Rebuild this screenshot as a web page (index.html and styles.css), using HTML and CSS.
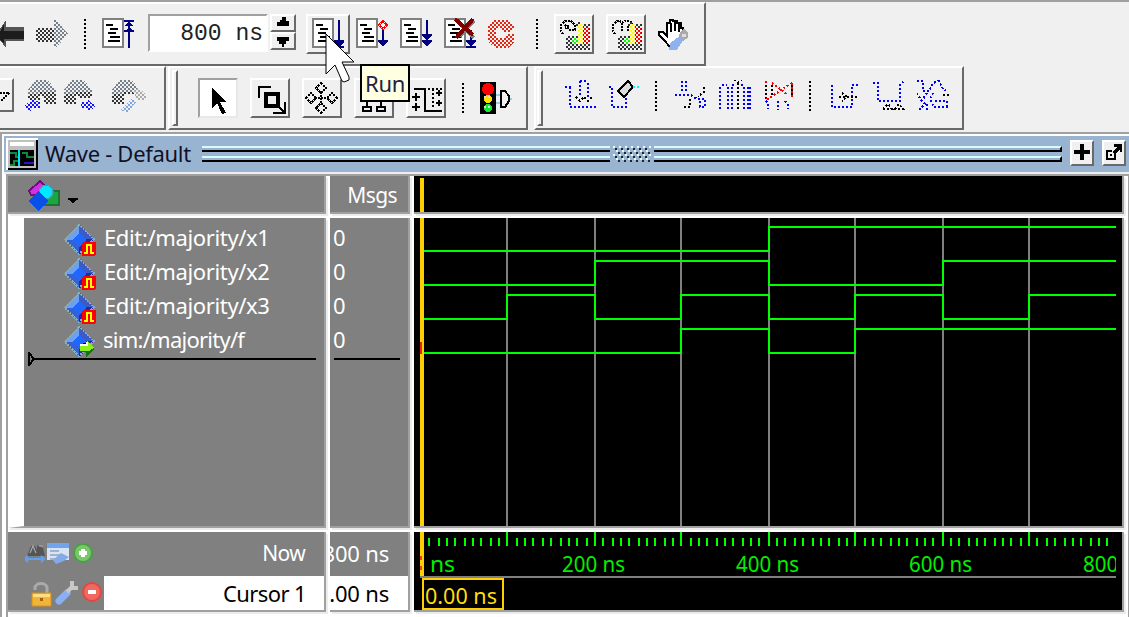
FILE: index.html
```html
<!DOCTYPE html>
<html lang="en">
<head>
<meta charset="utf-8">
<title>Wave - Default</title>
<link rel="stylesheet" href="styles.css">
</head>
<body>
<svg class="defs" width="0" height="0" aria-hidden="true">
  <defs>
    <pattern id="dk" width="4" height="4" patternUnits="userSpaceOnUse"><path fill="#333" d="M0 0h2v2H0zM2 2h2v2H2z"/></pattern>
    <pattern id="gy" width="4" height="4" patternUnits="userSpaceOnUse"><path fill="#75808a" d="M0 0h2v2H0zM2 2h2v2H2z"/></pattern>
    <pattern id="lg" width="4" height="4" patternUnits="userSpaceOnUse"><path fill="#aaa" d="M0 0h2v2H0zM2 2h2v2H2z"/></pattern>
    <pattern id="bl" width="4" height="4" patternUnits="userSpaceOnUse"><path fill="#1414ff" d="M0 0h2v2H0zM2 2h2v2H2z"/></pattern>
    <pattern id="sk" width="4" height="4" patternUnits="userSpaceOnUse"><path fill="#7ea6e8" d="M0 0h2v2H0zM2 2h2v2H2z"/></pattern>
    <pattern id="rd" width="4" height="4" patternUnits="userSpaceOnUse"><path fill="#e02814" d="M0 0h2v2H0zM2 2h2v2H2z"/></pattern>
    <pattern id="rr" width="4" height="4" patternUnits="userSpaceOnUse"><path fill="#f00" d="M0 0h2v2H0zM2 2h2v2H2z"/></pattern>
    <pattern id="yl" width="4" height="4" patternUnits="userSpaceOnUse"><path fill="#ff0" d="M0 0h2v2H0zM2 2h2v2H2z"/></pattern>
    <pattern id="gn" width="4" height="4" patternUnits="userSpaceOnUse"><path fill="#0f0" d="M0 0h2v2H0zM2 2h2v2H2z"/></pattern>
    <symbol id="doc" viewBox="0 0 22 30"><path fill="#fff" stroke="#808080" stroke-width="2" d="M1 1h20v28H1z"/><path stroke="#000" stroke-width="2" d="M4 7h7M8 11h8M6 15h8M8 19h10M6 23h12"/></symbol>
    <symbol id="gem" viewBox="0 0 32 32">
      <path fill="#3458b8" d="M15 0l16 15-16 16L0 16z"/>
      <path fill="#6e9ff0" d="M15 0v10l-5 6H0z"/><path fill="#3c5cc4" d="M15 0v10l6 6h10z"/>
      <path fill="#2828a4" d="M31 15H20l-5 6v10z"/><path fill="#3560d8" d="M0 16h10l5 6v9z"/>
      <path fill="#1e68ff" d="M15 9l7 7-7 7-7-7z"/>
      <path fill="none" stroke="#7fb0c4" stroke-width="1.6" stroke-dasharray="2 1" d="M15 1L1 16l14 14L30 15z"/>
    </symbol>
    <symbol id="edit" viewBox="0 0 32 32"><use href="#gem" width="32" height="32"/><rect x="18" y="18" width="14" height="14" rx="2" fill="#f00"/><path fill="none" stroke="#ff0" stroke-width="2" d="M20 29h3v-8h4v8h3"/></symbol>
    <symbol id="book" viewBox="0 0 28 26"><path fill="url(#gy)" d="M8 0h12l8 10v4H0v-4z"/><path fill="url(#dk)" d="M0 14h12v10H0zM16 12h12v12H16zM12 12h4v4h-4z"/></symbol>
    <symbol id="level" viewBox="0 0 36 36"><path fill="url(#dk)" d="M10 20h12v-2h12v16H10zM20 6h6v4h-6zM26 8h8v12h-8z"/><path fill="#f0f0f0" d="M22 8h5v20h-5zM28 12h5v16h-5zM16 22h6v6h-6z"/><path fill="url(#yl)" d="M22 8h5v20h-5z"/><path fill="url(#rr)" d="M28 12h5v16h-5z"/><path fill="url(#gn)" d="M16 22h6v6h-6z"/></symbol>
  </defs>
</svg>

<header class="toolbars">
  <div class="row row-top">
    <div class="bar bar-main">
      <svg class="ic back" width="24" height="32"><path fill="#555" d="M0 11L6 2v7h18v14H6v7L0 22z"/><path fill="#1c1c1c" d="M0 14L4 6v7h20v8H4v5l-4-5z"/></svg>
      <svg class="ic" width="32" height="32"><path fill="url(#dk)" d="M0 10h18v14H0z"/><path fill="url(#gy)" d="M18 2h2l12 14-12 14h-2z"/></svg>
      <i class="sep g16"></i>
      <svg class="ic g16" width="32" height="32"><use href="#doc" width="22" height="30"/><path fill="none" stroke="#000080" stroke-width="2" d="M22 3h10M27 2v28M22 13h10"/><path fill="#000080" d="M27 3l4 5h-8zM27 9l4 4h-8z"/></svg>
      <div class="field g14">800 ns</div>
      <div class="spin"><span><svg width="22" height="14"><path d="M10 1h4v4h3v5H5V6h3V4h2z"/></svg></span><span><svg width="22" height="14"><path d="M5 3h12v4h-3v3h-2v3h-2v-3H7V7H5z"/></svg></span></div>
      <div class="btn wide g10"><svg width="36" height="32"><use href="#doc" width="22" height="30"/><path stroke="#000080" stroke-width="2" d="M27 2v24M22 29h10"/><path fill="#000080" d="M22 22h10v2l-5 5-5-5z"/></svg></div>
      <svg class="ic g6" width="32" height="32"><use href="#doc" width="22" height="30"/><path stroke="#000080" stroke-width="2" d="M27 12v16"/><path fill="#000080" d="M22 22h10v2l-5 4-5-4z"/><path fill="#fff" stroke="#f00" stroke-width="2" stroke-dasharray="2 .8" d="M27 3l4 4-4 4-4-4z"/></svg>
      <svg class="ic" width="32" height="32"><use href="#doc" width="22" height="30"/><path stroke="#000080" stroke-width="2" d="M27 2v26"/><path fill="#000080" d="M22 16h10v2l-5 4-5-4zM22 22h10v2l-5 4-5-4z"/></svg>
      <svg class="ic" width="32" height="32"><use href="#doc" width="22" height="30"/><path stroke="#000080" stroke-width="2" d="M27 12v17M22 29h10"/><path fill="#000080" d="M22 22h10v2l-5 4-5-4z"/><path stroke="#808080" stroke-width="3" d="M14 4l16 16M30 3L16 19"/><path stroke="#800000" stroke-width="4" d="M11 1l18 16M29 1L12 20"/></svg>
      <svg class="ic" width="32" height="32"><path fill="url(#rd)" d="M6 2h14l6 6v4h-8v-2H8v4H0V8zM0 14h8v6h10v-4h8v8l-6 6H8L0 24z"/><path fill="url(#rd)" d="M14 10h8v4h-8z"/></svg>
      <i class="sep g16"></i>
      <div class="btn g16"><svg width="36" height="36"><path fill="none" stroke="#000" stroke-width="2" stroke-dasharray="2 1" d="M7 18l-2-3V9l4-4h6l4 4v5h-5l-5-5M9 13l4-4"/><use href="#level" width="36" height="36"/></svg></div>
      <div class="btn"><svg width="36" height="36"><path fill="none" stroke="#000" stroke-width="2" stroke-dasharray="2 1" d="M7 18l-2-3V9l4-4h3l2 4v6M14 7l3-2h5l3 4v9M20 15V9"/><use href="#level" width="36" height="36"/></svg></div>
      <svg class="ic" width="32" height="32"><path fill="#fff" stroke="#000" stroke-width="2" d="M11 28L7 23 1 17v-3h4l4 4V5h3V2h3v1h4v2h4v5h2v11l-6 7z"/><path stroke="#000" stroke-width="2" d="M13 5v9M17 4v9M21 6v8"/><path fill="#8fb2ee" d="M12 25l10-7 4 3-8 12h-7z"/><path fill="#aaa" d="M22 14l4-3 4 4v5l-5 3-4-4z"/><path fill="#ddd" d="M24 16h4v3h-4z"/></svg>
    </div>
  </div>
  <div class="row row-bottom">
    <div class="bar bar-find">
      <div class="combo"><svg width="12" height="30"><path fill="none" stroke="#000" stroke-width="2" stroke-dasharray="2 1" d="M0 13h9l-4 4-4 4"/></svg></div>
      <svg class="ic up g10" width="32" height="32"><use href="#book" x="4" width="28" height="26"/><path fill="#f0f0f0" d="M0 20h16v4H4z"/><path fill="url(#bl)" d="M0 26l8-6 8 2v6H8l-2 4z"/></svg>
      <svg class="ic up g8" width="32" height="32"><use href="#book" width="28" height="26"/><path fill="#f0f0f0" d="M16 18h14v6H16z"/><path fill="url(#bl)" d="M16 22h8v-2l8 6-8 6v-4h-6z"/></svg>
      <svg class="ic up g16" width="34" height="32"><use href="#book" x="0" width="28" height="26"/><path fill="#f0f0f0" d="M12 14h16v16H12z"/><path fill="url(#lg)" d="M20 10l6-2 8 6v6h-8z"/><path fill="url(#sk)" d="M20 18l4 4-8 10-8-2z"/></svg>
    </div>
    <div class="bar bar-mode">
      <i class="grip"></i>
      <div class="btn sunken g20"><svg width="36" height="36"><path d="M12 8l14 14h-6l6 11-4 1-5-11-5 5z"/></svg></div>
      <div class="btn"><svg width="36" height="36"><path fill="none" stroke="#000" stroke-width="2" d="M7 18V7h12"/><path fill="none" stroke="#000" stroke-width="4" d="M14 14h12v12H14z"/><path fill="none" stroke="#000" stroke-width="2" d="M26 26l7 7M33 22v11H21"/></svg></div>
      <div class="btn"><svg width="36" height="36"><path fill="none" stroke="#000" stroke-width="2" stroke-dasharray="2 1" d="M17 3l5 5-5 5-5-5zM17 33l5-5-5-5-5 5zM2 18l5-5 5 5-5 5zM33 18l-5-5-5 5 5 5zM11 18h13M17 12v12"/></svg></div>
      <div class="btn"><svg width="36" height="36"><path fill="none" stroke="#000" stroke-width="2" d="M11 26v-5h14v5M18 21v-9M7 27h8v4H7zM21 27h8v4h-8zM14 5h8v6h-8z"/></svg></div>
      <div class="btn"><svg width="36" height="36"><path fill="none" stroke="#000" stroke-width="2" d="M6 9h11v22h17M4 17h8M8 13v8M4 27h8M8 23v8M28 13h6M31 10v6M28 23h6M31 20v6"/><path stroke="#000" stroke-width="2" stroke-dasharray="2 2" d="M20 9h14M25 9v20"/></svg></div>
      <i class="sep g16"></i>
      <svg class="ic g16" width="32" height="32"><path d="M0 0h16v32H0z"/><path stroke="#8fd0f0" stroke-width="2" d="M16 13h5M16 21h5M29 17h3"/><circle cx="8" cy="7" r="6" fill="#f00"/><circle cx="8" cy="17" r="4" fill="#ffe000"/><circle cx="8" cy="26" r="4" fill="#10e830"/><path stroke="#ddd" stroke-width="2" stroke-dasharray="2 2" d="M4 15h8M4 25h8"/><path fill="#f0f0f0" stroke="#000" stroke-width="2" d="M21 9h4l4 5v5l-4 6h-4z"/></svg>
    </div>
    <div class="bar bar-edit">
      <i class="grip"></i>
      <svg class="ic dots g22" width="32" height="32"><path d="M0 7h6M5 7v20h26M15 1v16M15 1h8M23 3v16"/><path class="k" d="M11 17l4 4 4-4 4 4 4-4"/></svg>
      <svg class="ic dots" width="32" height="32"><path d="M0 7h3v20h14V17"/><path class="solid" d="M9 11L19 1l5 6-9 10z"/><path class="c" d="M24 7h7"/></svg>
      <i class="sep up g14"></i>
      <svg class="ic dots g18" width="32" height="32"><path d="M7 1v12M11 1v12M0 15h16l6 4h8v8h-5v-8"/><path class="k" d="M29 7v5l-6 4M9 27h6v-8"/></svg>
      <svg class="ic dots" width="32" height="32"><path d="M1 7v22M9 7v22M13 7v22M25 7v22M29 7v22M3 5h5M13 5h3M22 5h4M31 7v22"/><path class="k" d="M15 0l4 2 4-2M19 3v28"/></svg>
      <svg class="ic dots g14" width="32" height="32"><path class="k" d="M1 5v15M7 5v12M27 5v12"/><path class="r" d="M1 1v4M7 3l16 12M27 3L1 20M27 3v14"/><path d="M1 21l2 2v6M13 21v9M20 21l3 4v4"/></svg>
      <i class="sep up g12"></i>
      <svg class="ic dots g18" width="32" height="32"><path d="M3 5v22h20V5h6"/><path class="k" d="M10 17h18M13 13l5 4-5 4"/></svg>
      <svg class="ic dots" width="32" height="32"><path d="M0 3h5v18h22V5l3-3"/><path class="k" d="M10 29l5-5 4 5zM22 29l4-5 4 5z"/></svg>
      <svg class="ic dots" width="32" height="32"><path d="M0 1h6v10h6l4-8 6-2 4 8 4 2M0 13l4 7 4 4-6 6M10 13l-4 6M16 13l-3 6 4 8h14M18 21h12v6M10 30v-8"/><path class="k" d="M26 15h6"/></svg>
    </div>
  </div>
</header>

<main class="window">
  <div class="titlebar">
    <svg class="appicon" width="32" height="32"><path fill="#fff" d="M0 0h32v32H0z"/><path d="M2 30h28V2h2v30H2z"/><path fill="#c0c0c0" d="M2 2h28v28H2z"/><path fill="#fff" d="M4 4h24v4H4z"/><path d="M4 12h24v16H4z"/><path fill="none" stroke="#108838" stroke-width="2" d="M4 15h6v4h4M4 27h4v-4h4M16 15h5v4h7"/><path stroke="#00e0f0" stroke-width="2" d="M13 12v16"/><path stroke="#3010c8" stroke-width="2" d="M18 25h10"/></svg>
    <h1>Wave - Default</h1>
    <div class="rails"><i></i><i></i></div>
    <svg class="knurl" width="38" height="16"><path stroke="#e8fbff" stroke-width="2" stroke-dasharray="2 4" d="M0 1h38M3 5h35M0 9h38M3 13h35"/><path stroke="#223" stroke-width="2" stroke-dasharray="2 4" d="M2 3h36M5 7h33M2 11h36M5 15h33"/></svg>
    <div class="rails end"><i></i><i></i></div>
    <div class="tbtn"><svg width="22" height="22"><path stroke="#000" stroke-width="4" d="M2 10h16M10 2v16"/></svg></div>
    <div class="tbtn"><svg width="22" height="22"><path fill="none" stroke="#000" stroke-width="2" d="M8 9H3v8h8v-5"/><path d="M10 2h8v8h-2V7l-5 5-3-2 5-5h-3zM6 12h2v2H6z"/></svg></div>
  </div>

  <div class="panes">
    <div class="pane head-names">
      <svg width="52" height="34"><path fill="#d030e8" stroke="#70107c" stroke-width="2" d="M1 11L12 1l8 8-9 7-8-1z"/><path fill="#18a840" stroke="#207038" stroke-width="2" d="M17 11h14v14H17z"/><circle cx="18" cy="12" r="7" fill="#00e8ff" stroke="#4c98b0" stroke-width="1.5"/><path fill="#0850e8" d="M10 11l10 10-10 10L0 21z"/><path d="M40 18h10v2h-2l-2 3h-2l-2-3h-2z"/></svg>
    </div>
    <div class="pane head-msgs"><span>Msgs</span></div>
    <div class="pane head-wave"><i></i></div>

    <div class="pane names">
      <div class="signal"><svg width="32" height="32"><use href="#edit" width="32" height="32"/></svg><span>Edit:/majority/x1</span></div>
      <div class="signal"><svg width="32" height="32"><use href="#edit" width="32" height="32"/></svg><span>Edit:/majority/x2</span></div>
      <div class="signal"><svg width="32" height="32"><use href="#edit" width="32" height="32"/></svg><span>Edit:/majority/x3</span></div>
      <div class="signal out"><svg width="32" height="32"><use href="#gem" width="32" height="32"/><path fill="#187010" d="M16 20h6v-4l9 7-9 8v-5h-6z"/><path fill="#8cf020" d="M16 19h7v-4l7 7-5 3h-9z"/><path stroke="#fff" stroke-width="2" d="M16 19h7v-3"/></svg><span>sim:/majority/f</span></div>
      <svg class="endline" width="288" height="14"><path fill="none" stroke="#000" stroke-width="2" d="M1 1v12l5-6z"/><path stroke="#000" stroke-width="2" d="M6 7h282"/></svg>
    </div>
    <div class="pane values"><span>0</span><span>0</span><span>0</span><span>0</span><i></i></div>
    <div class="pane wave">
      <svg width="708" height="308" viewBox="414 218 708 308">
        <path class="grid" d="M507 218v308M595 218v308M681 218v308M769 218v308M855 218v308M943 218v308M1029 218v308"/>
        <path class="trace" d="M422 251H769V227H1116"/>
        <path class="trace" d="M422 285H595V261H769V285H943V261H1116"/>
        <path class="trace" d="M422 319H507V295H595V319H681V295H769V319H855V295H943V319H1029V295H1116"/>
        <path class="trace" d="M422 353H681V329H769V353H855V329H1116"/>
        <path class="cursor" d="M422 218v308"/><path stroke="#f02010" stroke-width="2" d="M421 342v12"/>
      </svg>
    </div>

    <div class="pane foot-names">
      <div class="now">
        <svg width="72" height="24"><path fill="#555" d="M2 14L6 4h4l2 4V3l6 3 2 8z"/><path stroke="#aaa" stroke-width="1.2" fill="none" d="M5 11l3-7 3 7M14 4h4"/><path fill="none" stroke="#60a0f0" stroke-width="2" d="M0 17h19M3 14l-3 3 3 3M16 14l3 3-3 3"/><path fill="#d8e4f4" d="M22 1h22v17H22z"/><path fill="#72a4ec" d="M22 1h22v5H22z"/><path stroke="#a2b2cc" stroke-width="2" d="M25 9h9M25 13h11M25 17h7"/><path fill="#82aae8" d="M28 18l8-7 8 4-5 4-8 3z"/><circle cx="58" cy="11" r="10" fill="#48a048"/><circle cx="58" cy="11" r="8" fill="#78c868"/><path stroke="#fff" stroke-width="4" d="M54 11h8M58 7v8"/></svg>
        <span>Now</span>
      </div>
      <div class="cur">
        <div class="tools"><svg width="74" height="28"><path fill="none" stroke="#aaa" stroke-width="3" d="M5 9V7c0-6 12-6 12 0v6"/><path fill="#f0b438" stroke="#d89018" d="M2 12h19v13H2z"/><path fill="#ffe080" d="M3 13h17v3H3z"/><path fill="#a86010" d="M10 17h3v3h-3z"/><path stroke="#88b0f4" stroke-width="7" stroke-linecap="round" d="M29 20l8-8"/><path fill="none" stroke="#c8c8c8" stroke-width="4" d="M37 11l6-6M42 0v7h6"/><circle cx="62" cy="11" r="10" fill="#e04840"/><circle cx="62" cy="11" r="8" fill="#f06860"/><path fill="#fff" d="M58 9h8v4h-8z"/></svg></div>
        <span>Cursor 1</span>
      </div>
    </div>
    <div class="pane foot-values"><span class="nowv">800 ns</span><span class="curv">0.00 ns</span></div>
    <div class="pane foot-wave">
      <svg width="702" height="78" viewBox="414 532 702 78">
        <path id="ticks" class="ticks" d=""/>
        <path stroke="#808080" stroke-width="2" d="M420 577h696"/>
        <g class="scale">
          <text x="411" y="572" textLength="44" lengthAdjust="spacingAndGlyphs">0 ns</text>
          <text x="562" y="572" textLength="63" lengthAdjust="spacingAndGlyphs">200 ns</text>
          <text x="736" y="572" textLength="63" lengthAdjust="spacingAndGlyphs">400 ns</text>
          <text x="909" y="572" textLength="63" lengthAdjust="spacingAndGlyphs">600 ns</text>
          <text x="1083" y="572" textLength="63" lengthAdjust="spacingAndGlyphs">800 ns</text>
        </g>
        <path fill="#000" d="M414 532h6v78h-6z"/>
        <path class="cursor" d="M422 532v44"/><path stroke="#f04010" stroke-width="2" stroke-dasharray="4 6" d="M421 556v16"/>
        <path fill="#000" stroke="#ffcf00" stroke-width="2" d="M423 579h80v30h-80z"/>
        <text class="curtext" x="425" y="604" textLength="72" lengthAdjust="spacingAndGlyphs">0.00 ns</text>
      </svg>
    </div>
  </div>
</main>

<div class="tooltip">Run</div>
<svg class="pointer" width="32" height="52"><path fill="#fff" stroke="#000" d="M1 1v40l9-9 7 16 2 1 5-2v-3l-7-15h12z"/></svg>
<script src="script.js"></script>
</body>
</html>
```
FILE: styles.css
```css
* { box-sizing: border-box; }
body { margin: 0; width: 1129px; height: 617px; overflow: hidden; position: relative; background: #f0f0f0; font: 22px/34px "Noto Sans", sans-serif; color: #000; }
svg { display: block; flex: none; shape-rendering: crispEdges; }
.defs { position: absolute; }

/* toolbars */
.toolbars { height: 132px; border-top: 2px solid #a0a0a0; }
.row { display: flex; height: 64px; }
.bar { display: flex; align-items: center; height: 64px; border: 2px solid #696969; border-top-color: #fff; border-left: 0; }
.bar > * { flex: none; margin-left: 12px; }
.bar > :first-child { margin-left: 0; }
.bar-main { width: 706px; }
.bar-find { width: 166px; }
.bar-mode { width: 360px; margin-left: 2px; }
.bar-edit { width: 430px; margin-left: 6px; }
.bar-mode, .bar-edit { border-left: 2px solid #fff; }
.bar > .g6 { margin-left: 6px; }
.bar > .g8 { margin-left: 8px; }
.bar > .g10 { margin-left: 10px; }
.bar > .g12 { margin-left: 12px; }
.bar > .g14 { margin-left: 14px; }
.bar > .g16 { margin-left: 16px; }
.bar > .g18 { margin-left: 18px; }
.bar > .g20 { margin-left: 20px; }
.bar > .g22 { margin-left: 22px; }
.sep { width: 2px; height: 30px; background: repeating-linear-gradient(#000 0 2px, transparent 2px 4px); }
.up, .dots { margin-bottom: 4px; }
.grip { width: 6px; height: 56px; background: #f0f0f0; border: 2px solid #fff; border-right-color: #696969; border-bottom-color: #696969; }
.bar > .grip { margin-left: 2px; }
.bar-edit > .grip { margin-left: 1px; }
.btn { width: 40px; height: 40px; display: flex; align-items: center; border: 2px solid #fff; border-right-color: #696969; border-bottom-color: #696969; }
.btn.wide { width: 44px; padding-left: 4px; }
.btn.sunken { background: #fff; border-color: #a0a0a0 #e8e8e8 #e8e8e8 #a0a0a0; }
.field { width: 120px; height: 38px; margin-bottom: 2px; background: #fff; border: 2px solid #a0a0a0; border-right-color: #fff; border-bottom-color: #fff; text-align: right; padding-right: 3px; font: 23px/37px "Liberation Mono", monospace; color: #222; }
.bar > .spin { margin-left: 2px; margin-bottom: 4px; width: 26px; height: 36px; display: grid; grid-template-rows: 18px 18px; }
.spin span { border: 2px solid #fff; border-right-color: #696969; border-bottom-color: #696969; }
.combo { width: 14px; height: 34px; margin-bottom: 6px; border: 2px solid #fff; border-width: 2px 2px 2px 0; border-right-color: #696969; border-bottom-color: #696969; }
.dots path { fill: none; stroke: #00f; stroke-width: 2; stroke-dasharray: 2 2; }
.dots .k { stroke: #000; }
.dots .r { stroke: #f00; }
.dots .c { stroke: #0ff; }
.dots .solid { stroke: #000; fill: #ddd; stroke-dasharray: none; }

/* wave window */
.window { height: 485px; border-top: 2px solid #a0a0a0; border-left: 2px solid #a0a0a0; background: #fff; }
.titlebar { height: 40px; margin-left: 2px; border-top: 2px solid #fff; border-bottom: 2px solid #eee; display: flex; align-items: center; background: #99b4d1; padding-left: 2px; }
h1 { margin: -2px 0 0 7px; width: 157px; font-size: 22px; font-weight: 400; line-height: 34px; white-space: nowrap; letter-spacing: -0.3px; color: #101028; }
.rails { width: 408px; display: grid; gap: 4px; }
.rails i { height: 6px; border-top: 2px solid #d8fbff; border-bottom: 2px solid #000; }
.rails.end i { border-right: 2px solid #000; }
.knurl { margin: 0 3px; }
.tbtn { width: 24px; height: 26px; margin: 0 0 2px 8px; background: #f0f0f0; border: 2px solid #fff; border-right-color: #696969; border-bottom-color: #696969; }

.panes { width: 1123px; height: 443px; margin-left: 4px; padding-left: 2px; border-top: 2px solid #a0a0a0; border-right: 1px solid #a0a0a0; display: grid; grid-template-columns: 318px 80px 710px; grid-template-rows: 38px 310px 80px; gap: 4px; background: linear-gradient(90deg, #a0a0a0 2px, #fff 2px); }
.pane { overflow: hidden; background: #808080; color: #fff; border: 2px solid #a0a0a0; border-width: 0 2px 2px 0; box-shadow: 2px 2px #ececec; }
.head-names { padding: 4px 0 0 20px; }
.head-msgs { text-align: right; padding-right: 11px; line-height: 38px; font-size: 21px; letter-spacing: -0.6px; }
.head-wave, .wave, .foot-wave { background: #000; }
.head-wave i { display: block; width: 4px; height: 34px; margin: 2px 0 0 6px; background: #ffcf00; }
.names { border-left: 16px solid #fff; padding-top: 4px; }
.signal { display: flex; align-items: center; height: 34px; padding: 2px 0 0 40px; }
.signal span { margin: -6px 0 0 8px; white-space: nowrap; letter-spacing: -0.36px; }
.signal.out span { margin-left: 7px; letter-spacing: -0.75px; }
.endline { margin: -6px 0 0 4px; }
.values { padding: 2px 0 0 3px; }
.values span { display: block; height: 34px; }
.values i { display: block; width: 66px; height: 2px; margin: 2px 0 0 1px; background: #000; }
.grid { stroke: #808080; stroke-width: 2; fill: none; }
.trace { stroke: #0f0; stroke-width: 2; fill: none; }
.cursor { stroke: #ffcf00; stroke-width: 4; fill: none; }
.now { height: 44px; display: flex; justify-content: space-between; align-items: center; padding: 0 19px 0 17px; }
.now span { margin-top: -2px; font-size: 21px; letter-spacing: -0.7px; }
.cur { height: 34px; display: flex; justify-content: space-between; background: #fff; color: #000; padding-right: 18px; line-height: 34px; letter-spacing: -0.6px; }
.tools { width: 96px; height: 34px; background: #808080; padding: 5px 0 0 22px; }
.foot-values { display: grid; grid-template-rows: 44px 34px; letter-spacing: -0.2px; }
.foot-values span { display: flex; justify-content: flex-end; align-items: center; padding: 0 19px 2px 0; white-space: nowrap; overflow: hidden; }
.foot-values .curv { background: #fff; color: #000; padding-bottom: 0; }
.ticks { stroke: #0f0; stroke-width: 2; fill: none; }
.scale text { fill: #00f000; font-size: 22px; }
.curtext { fill: #ffdc10; font-size: 22px; }
.now svg, .cur svg { shape-rendering: auto; }

/* overlays */
.tooltip { position: absolute; left: 360px; top: 64px; width: 50px; height: 38px; border: 2px solid #000; background: #ffffe1; color: #202048; line-height: 35px; text-align: center; letter-spacing: -0.3px; }
.pointer { position: absolute; left: 325px; top: 33px; shape-rendering: auto; }
```
FILE: script.js
```js
// Time scale: one tick every 10 ns, a tall one every 100 ns.
let d = "";
for (let n = 1; n < 80; n++) {
  const x = 2 * Math.round(210 + 4.345 * n) + 1;
  d += n % 10 === 0 ? `M${x} 532v14` : `M${x} 538v8`;
}
document.getElementById("ticks").setAttribute("d", d);
```
